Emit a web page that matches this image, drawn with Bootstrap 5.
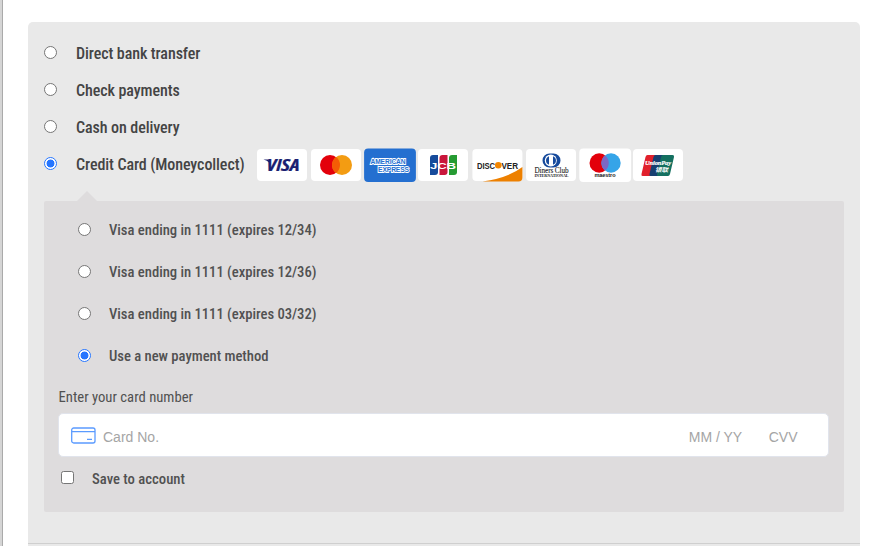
<!DOCTYPE html>
<html lang="en">
<head>
<meta charset="utf-8">
<meta name="viewport" content="width=device-width, initial-scale=1">
<title>Checkout – Payment</title>
<link href="https://cdn.jsdelivr.net/npm/bootstrap@5.3.0/dist/css/bootstrap.min.css" rel="stylesheet">
<style>
body{font-family:"Roboto Condensed",Roboto,"Liberation Sans",sans-serif;font-stretch:75%;color:#444;background:#fff;height:546px;overflow:hidden;border-left:2px solid #d5d5d5;box-shadow:inset 1px 0 #aaa}
.pay-panel{margin:22px 13px 0 26px;height:524px;background:#e9e9e9;border-radius:5px 5px 0 0;padding:13px 16px 0}
.pay-row{height:37px;font-size:16px;font-weight:500;line-height:37px;letter-spacing:-.08px}
.pay-row .form-check-input,.saved-row .form-check-input,.save-row .form-check-input{width:13px;height:13px;margin:0;border:1px solid #767676;background-color:#fff;flex:none;box-shadow:none}
.form-check-input[type=checkbox]{border-radius:2.5px}
.form-check-input[type=radio]:checked{border-color:#2575ff!important;background-image:radial-gradient(circle,#2575ff 3.6px,#fff 4.3px)}
.pay-row .form-check-input,.saved-row .form-check-input{margin-bottom:1px}
.pay-row .form-check-input{margin-bottom:2px}
.pay-row label{margin-left:19px}
.wide-label{width:169px;white-space:nowrap}
.logos{gap:3.75px;margin-left:12px}
.logos svg{display:block;width:50px;height:32px;overflow:visible}
.pay-box{position:relative;margin-top:18px;height:311px;background:#dedcdd;border-radius:2px;color:#515151;padding:8px 15px 0 14px}
.pay-box::before{content:"";position:absolute;left:33px;top:-10px;border:solid transparent;border-width:0 10px 10px;border-bottom-color:#dedcdd}
.saved-row{height:42px;padding-left:20px;font-size:14.7px;font-weight:500;letter-spacing:-.03px}
.saved-row label{margin-left:18px}
.number-label{height:36px;line-height:40px;font-size:14.7px;padding-left:.5px}
.card-field{height:44px;background:#fff;border:1px solid #e1e4ec;border-radius:5px;font:14px "Liberation Sans",Arial,sans-serif;color:#a5a5a5;padding:4px 30.5px 0 12px}
.card-field svg{margin-bottom:3px}
.card-text{margin-left:7px}
.cvv-text{margin-left:26.5px}
.save-row{height:42px;padding-left:3px;font-size:14.7px;font-weight:500}
.save-row .form-check-input{margin-bottom:1px}
.save-row label{margin:2px 0 0 18px}
.panel-end{border-top:1px solid #cfcfcf;margin:31px -16px 0}
</style>
</head>
<body>
<main class="pay-panel">
  <div class="pay-row d-flex align-items-center"><input class="form-check-input" type="radio" name="method" id="m1"><label for="m1">Direct bank transfer</label></div>
  <div class="pay-row d-flex align-items-center"><input class="form-check-input" type="radio" name="method" id="m2"><label for="m2">Check payments</label></div>
  <div class="pay-row d-flex align-items-center"><input class="form-check-input" type="radio" name="method" id="m3"><label for="m3">Cash on delivery</label></div>
  <div class="pay-row d-flex align-items-center"><input class="form-check-input" type="radio" name="method" id="m4" checked><label for="m4" class="wide-label">Credit Card (Moneycollect)</label>
    <div class="logos d-flex align-items-center">
      <svg viewBox="0 0 50 32"><rect width="50" height="32" rx="4" fill="#fff"/><text x="9.500" y="21.700" textLength="33" lengthAdjust="spacingAndGlyphs" font-family="Open Sans" font-weight="700" font-style="italic" font-size="15.500" fill="#1a1f71" stroke="#1a1f71" stroke-width=".2">VISA</text><path d="M6.500 10.500h5l1.500 4q-3-3.300-6.500-4z" fill="#1a1f71"/></svg>
      <svg viewBox="0 0 50 32"><rect width="50" height="32" rx="4" fill="#fff"/><circle cx="19" cy="16" r="10" fill="#e3000b"/><circle cx="31" cy="16" r="10" fill="#f39c12"/><path d="M25 8a10 10 0 0 1 0 16a10 10 0 0 1 0-16z" fill="#f45d05"/></svg>
      <svg viewBox="0 0 50 32"><rect x="-.9" y="-.5" width="51.800" height="33.400" rx="4" fill="#246fd0"/><g font-family="Liberation Sans" font-weight="700" font-size="7.400" fill="#246fd0" stroke="#fff" stroke-width="1.900" paint-order="stroke"><text x="5.500" y="15.200" textLength="35" lengthAdjust="spacingAndGlyphs">AMERICAN</text><text x="13" y="23.400" textLength="31" lengthAdjust="spacingAndGlyphs">EXPRESS</text></g></svg>
      <svg viewBox="0 0 50 32"><rect width="50" height="32" rx="4" fill="#fff"/><path d="M15 6h5v17q0 3-3 3h-5V9q0-3 3-3z" fill="#164b9b"/><path d="M24.500 6h5v17q0 3-3 3h-5V9q0-3 3-3z" fill="#c9163b"/><path d="M34 6h5v17q0 3-3 3h-5V9q0-3 3-3z" fill="#259b32"/><text x="12" y="19.500" textLength="26" lengthAdjust="spacingAndGlyphs" font-family="Liberation Sans" font-weight="700" font-size="9" fill="#fff">JCB</text></svg>
      <svg viewBox="0 0 50 32"><rect x=".4" width="50" height="32" rx="4" fill="#fff"/><path d="M10.400 32.500Q36 29 50.400 18v10.500q0 4-4 4z" fill="#ed8000"/><g font-family="Liberation Sans" font-weight="700" font-size="9" fill="#222"><text x="5" y="19.500" textLength="18" lengthAdjust="spacingAndGlyphs">DISC</text><text x="29.500" y="19.500" textLength="16.500" lengthAdjust="spacingAndGlyphs">VER</text></g><circle cx="26.300" cy="16.200" r="3.300" fill="#f28500"/></svg>
      <svg viewBox="0 0 50 32"><rect width="50" height="32" rx="4" fill="#fff"/><path d="M23.500 4.500h4a7 7 0 0 1 0 14h-4a7 7 0 0 1 0-14z" fill="#174a9c"/><circle cx="24.800" cy="11.500" r="6" fill="#fff"/><path d="M23 7.200v8.600a4.600 4.600 0 0 1 0-8.600zM27 7.200v8.600a4.600 4.600 0 0 0 0-8.600z" fill="#174a9c"/><text x="8.500" y="24" textLength="34" lengthAdjust="spacingAndGlyphs" font-family="Liberation Serif" font-size="7.500" fill="#222" stroke="#222" stroke-width=".1">Diners Club</text><text x="8.500" y="28.400" textLength="34" lengthAdjust="spacingAndGlyphs" font-family="Liberation Serif" font-weight="700" font-size="4.500" fill="#222">INTERNATIONAL</text></svg>
      <svg viewBox="0 0 50 32"><rect x="-.7" y="-.5" width="51.800" height="33.400" rx="4" fill="#fff"/><circle cx="19.200" cy="14" r="9.700" fill="#e3000b"/><circle cx="31" cy="14" r="9.700" fill="#35a4e8"/><path d="M25.100 6.400a9.700 9.700 0 0 1 0 15.200a9.700 9.700 0 0 1 0-15.200z" fill="#7d67c4"/><text x="14.500" y="28.300" textLength="21" lengthAdjust="spacingAndGlyphs" font-family="Liberation Sans" font-weight="700" font-size="4.500" fill="#222">maestro</text></svg>
      <svg viewBox="0 0 50 32"><rect width="50" height="32" rx="4" fill="#fff"/><path d="M14.500 6H24l-5 21H9.500q-1.500 0-1-2l4-17q.5-2 2-2z" fill="#e1202c"/><path d="M24 6h9l-5 21H17.500q-1.500 0-1-2l4-17q.5-2 2-2z" fill="#173f70"/><path d="M32 6h7.500q2 0 1.500 2l-4 17q-.5 2-2 2h-10q-1.500 0-1-2l4-17q.5-2 2-2z" fill="#147060"/><text x="12" y="15.800" textLength="26" lengthAdjust="spacingAndGlyphs" font-family="Liberation Serif" font-style="italic" font-weight="700" font-size="7" fill="#fff" stroke="#fff" stroke-width=".2">UnionPay</text><text x="22" y="23" textLength="13" lengthAdjust="spacingAndGlyphs" font-family="Noto Sans CJK SC" font-style="italic" font-weight="700" font-size="5.800" fill="#fff">银联</text></svg>
    </div>
  </div>
  <section class="pay-box">
    <div class="saved-row d-flex align-items-center"><input class="form-check-input" type="radio" name="token" id="t1"><label for="t1">Visa ending in 1111 (expires 12/34)</label></div>
    <div class="saved-row d-flex align-items-center"><input class="form-check-input" type="radio" name="token" id="t2"><label for="t2">Visa ending in 1111 (expires 12/36)</label></div>
    <div class="saved-row d-flex align-items-center"><input class="form-check-input" type="radio" name="token" id="t3"><label for="t3">Visa ending in 1111 (expires 03/32)</label></div>
    <div class="saved-row d-flex align-items-center"><input class="form-check-input" type="radio" name="token" id="t4" checked><label for="t4">Use a new payment method</label></div>
    <div class="number-label">Enter your card number</div>
    <div class="card-field d-flex align-items-center">
      <svg width="25" height="17" viewBox="0 0 25 17" fill="none" stroke="#5b9bff" stroke-width="1.300"><rect x=".7" y="1" width="23.300" height="15" rx="2"/><path d="M1 4.700h23M16 12.300h5"/></svg>
      <span class="card-text">Card No.</span><span class="ms-auto">MM / YY</span><span class="cvv-text">CVV</span>
    </div>
    <div class="save-row d-flex align-items-center"><input class="form-check-input" type="checkbox" id="save"><label for="save">Save to account</label></div>
  </section>
  <div class="panel-end"></div>
</main>
<script src="https://cdn.jsdelivr.net/npm/bootstrap@5.3.0/dist/js/bootstrap.bundle.min.js"></script>
</body>
</html>
